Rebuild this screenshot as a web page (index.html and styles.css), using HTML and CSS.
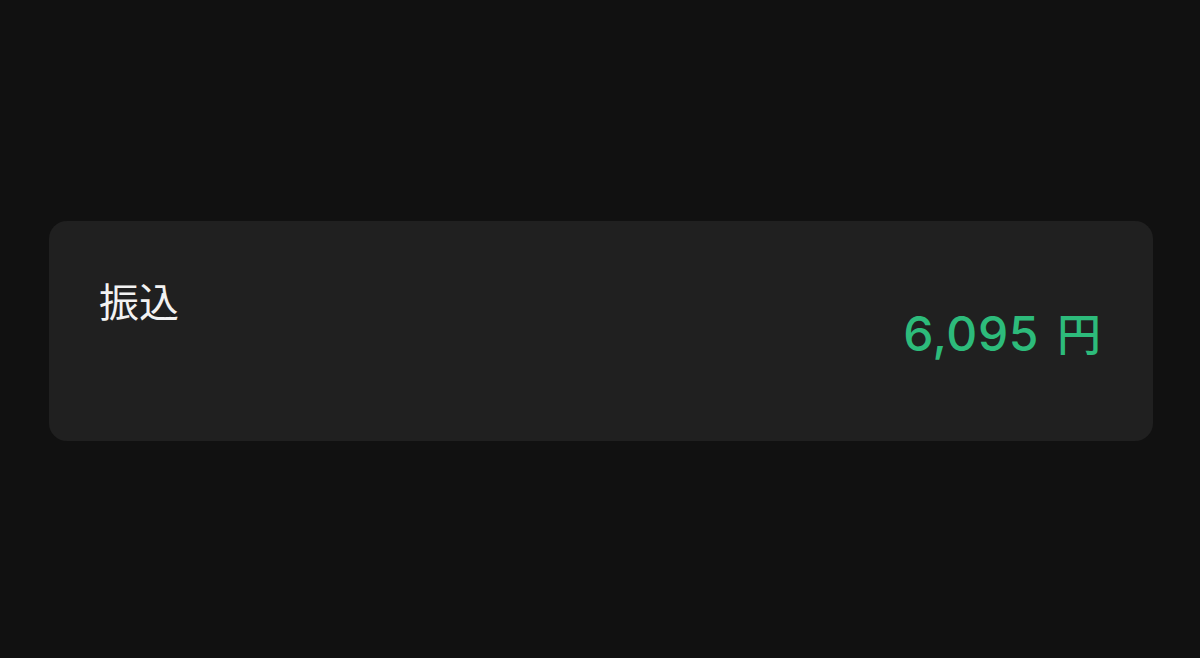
FILE: index.html
```html
<!DOCTYPE html>
<html lang="ja">
<head>
<meta charset="utf-8">
<link rel="stylesheet" href="styles.css">
</head>
<body>
<main class="screen">
  <section class="card">
    <div class="label">振込</div>
    <div class="amount"><span class="num">6,095</span><span class="yen">円</span></div>
  </section>
</main>
</body>
</html>
```

FILE: styles.css
```css
html, body {
  margin: 0;
  padding: 0;
  background: #111111;
}
.screen {
  width: 1200px;
  height: 658px;
  box-sizing: border-box;
  padding: 221px 47px 0 49px;
}
.card {
  height: 220px;
  box-sizing: border-box;
  background: #202020;
  border-radius: 18px;
  padding: 55px 52px 0 50px;
  display: flex;
  flex-direction: column;
}
.label {
  font-family: "Noto Sans CJK JP", "Noto Sans", sans-serif;
  font-size: 40px;
  line-height: 48px;
  color: #f2f2f2;
  font-weight: 400;
}
.amount {
  align-self: flex-end;
  margin-top: -20px;
  color: #2dbb7b;
  font-family: "Inter", "Noto Sans CJK JP", sans-serif;
  font-weight: 500;
  font-size: 48px;
  line-height: 56px;
  white-space: nowrap;
  display: flex;
  align-items: baseline;
  gap: 18px;
}
.num {
  letter-spacing: 0.6px;
}
.yen {
  font-family: "Noto Sans CJK JP", sans-serif;
  font-weight: 500;
  font-size: 44px;
}
```
